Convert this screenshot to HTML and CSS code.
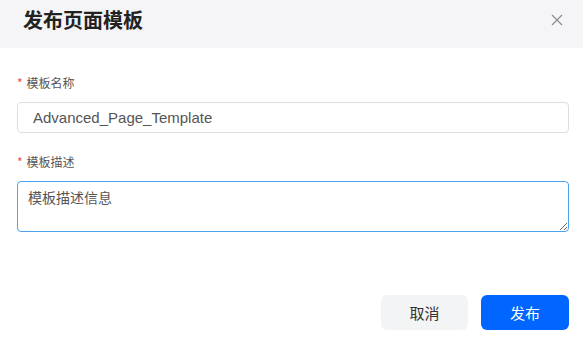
FILE: index.html
```html
<!DOCTYPE html>
<html>
<head>
  <meta charset="UTF-8">
  <link rel="stylesheet" href="styles.css">
</head>
<body>
  <div class="dialog">
    <div class="dialog-header">
      <span class="dialog-title">发布页面模板</span>
      <span class="dialog-close">
        <svg width="12" height="12" viewBox="0 0 12 12"><path d="M1 1L11 11M11 1L1 11" stroke="#8a8d93" stroke-width="1.2" fill="none"/></svg>
      </span>
    </div>
    <div class="dialog-body">
      <div class="form-item">
        <label class="form-label"><span class="required">*</span>模板名称</label>
        <input type="text" class="form-input" value="Advanced_Page_Template">
      </div>
      <div class="form-item">
        <label class="form-label"><span class="required">*</span>模板描述</label>
        <textarea class="form-textarea">模板描述信息</textarea>
      </div>
    </div>
    <div class="dialog-footer">
      <button class="btn btn-cancel">取消</button>
      <button class="btn btn-primary">发布</button>
    </div>
  </div>
</body>
</html>
```

FILE: styles.css
```css
body {
  margin: 0;
  width: 583px;
  height: 340px;
  background: #fff;
  font-family: "Noto Sans", "Noto Sans CJK SC", sans-serif;
  overflow: hidden;
}
.dialog {
  display: flex;
  flex-direction: column;
  height: 340px;
}
.dialog-header {
  height: 48px;
  box-sizing: border-box;
  padding: 7px 20px 0 23px;
  background: #f5f5f7;
  display: flex;
  justify-content: space-between;
  align-items: flex-start;
}
.dialog-title {
  font-size: 20px;
  line-height: 26px;
  font-weight: bold;
  color: #222;
  font-family: "Noto Sans CJK SC", sans-serif;
}
.dialog-close {
  display: flex;
  margin-top: 7px;
}
.dialog-body {
  padding: 25px 14px 0 17px;
}
.form-item {
  margin-bottom: 19px;
}
.form-label {
  display: block;
  font-size: 12px;
  line-height: 20px;
  color: #555;
  margin-bottom: 9px;
  font-family: "Noto Sans CJK SC", sans-serif;
}
.required {
  color: #f54a45;
  margin-right: 4px;
}
.form-input {
  display: block;
  width: 100%;
  box-sizing: border-box;
  height: 31px;
  padding: 0 15px;
  border: 1px solid #dcdee2;
  border-radius: 4px;
  font-size: 15px;
  color: #555;
  font-family: "Liberation Sans", "Noto Sans CJK SC", sans-serif;
  outline: none;
}
.form-textarea {
  display: block;
  width: 100%;
  box-sizing: border-box;
  height: 51px;
  padding: 5px 10px;
  border: 1px solid #4ba3f2;
  border-radius: 4px;
  font-size: 14px;
  line-height: 20px;
  color: #555;
  font-family: "Noto Sans CJK SC", sans-serif;
  outline: none;
}
.dialog-footer {
  margin-top: auto;
  padding: 0 14px 10px 0;
  display: flex;
  justify-content: flex-end;
  gap: 13px;
}
.btn {
  height: 35px;
  width: 88px;
  border: none;
  border-radius: 6px;
  font-size: 15px;
  font-family: "Noto Sans CJK SC", sans-serif;
  cursor: pointer;
}
.btn-cancel {
  width: 87px;
  background: #f3f4f6;
  color: #333;
}
.btn-primary {
  background: #0066ff;
  color: #fff;
}
```
